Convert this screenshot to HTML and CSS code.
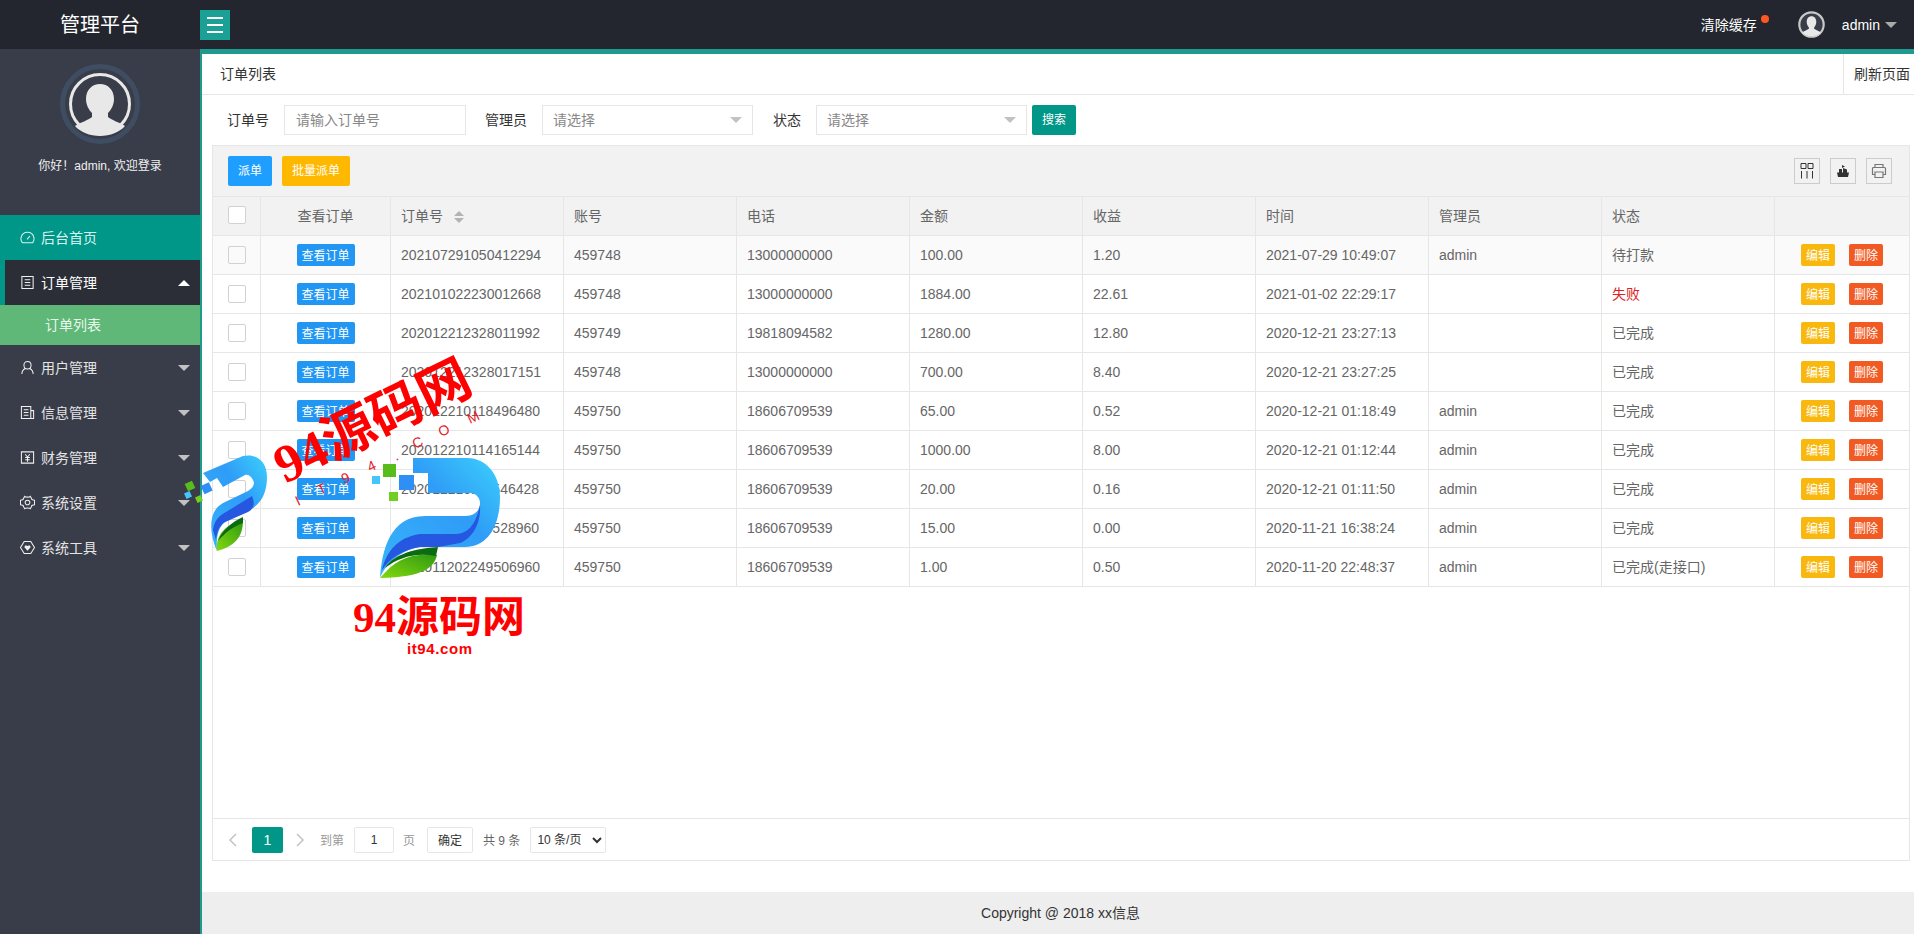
FILE: index.html
```html
<!DOCTYPE html>
<html>
	<head>
		<meta charset="utf-8">
		<title>管理平台</title>
		<link rel="stylesheet" href="styles.css">
	</head>

	<body>
		<div id="header">
			<div class="brand">管理平台</div>
			<div class="menuBtn"><span></span><span></span><span></span></div>
			<div class="headerRight">
				<div class="clearCache">清除缓存<i></i></div>
				<svg class="headAvatar" width="27" height="27" viewBox="0 0 62 62">
					<circle cx="31" cy="31" r="28" fill="#393d49" stroke="#c8c8c8" stroke-width="5"/>
					<path d="M31 12c7 0 11 5.500 11 13 0 6-3 10-5 13v3c3 3 11 4 15 9-5 5-13 8-21 8s-16-3-21-8c4-5 12-6 15-9v-3c-2-3-5-7-5-13 0-7.500 4-13 11-13z" fill="#e8e8e8"/>
				</svg>
				<div class="headUser">admin</div>
				<div class="caret down grey"></div>
			</div>
		</div>

		<div id="container">
			<div id="sidebar">
				<div class="userBox">
					<svg class="bigAvatar" width="80" height="80" viewBox="0 0 80 80">
						<circle cx="40" cy="40" r="37.500" fill="#393d49" stroke="#3f4d63" stroke-width="5"/>
						<circle cx="40" cy="40" r="29.500" fill="#393d49" stroke="#e8e8e8" stroke-width="3"/>
						<path d="M40 20c8 0 14 6 14 15 0 6-3 11-6 14v4c3 3 11 5 17 9-5 6-15 10-25 10s-20-4-25-10c6-4 14-6 17-9v-4c-3-3-6-8-6-14 0-9 6-15 14-15z" fill="#e8e8e8"/>
					</svg>
					<div class="hello">你好！admin, 欢迎登录</div>
				</div>

				<ul class="nav">
					<li class="navItem home">
						<svg class="navIcon" viewBox="0 0 16 16"><path d="M2.500 13.500C1 11.500.8 9.500 1.200 8 2 4.500 5 2.500 8 2.500s6 2 6.800 5.500c.4 1.500.2 3.500-1.300 5.500zM7.500 10l3-3.500"/></svg>
						<span class="navText">后台首页</span>
					</li>
					<li class="navItem open">
						<svg class="navIcon" viewBox="0 0 16 16"><path d="M2 1.500h12v13H2zM5 5h6M5 8h6M5 11h6"/></svg>
						<span class="navText">订单管理</span>
						<div class="caret up"></div>
					</li>
					<li class="navSub">订单列表</li>
					<li class="navItem">
						<svg class="navIcon" viewBox="0 0 16 16"><path d="M8 1.500c2.400 0 3.800 1.800 3.800 4S10.400 9.500 8 9.500 4.200 7.700 4.200 5.500 5.600 1.500 8 1.500zM2 15c0-3.500 2.500-5.500 3.500-6M14 15c0-3.500-2.500-5.500-3.500-6"/></svg>
						<span class="navText">用户管理</span>
						<div class="caret down"></div>
					</li>
					<li class="navItem">
						<svg class="navIcon" viewBox="0 0 16 16"><path d="M1.500 1.500h10v13h-10zM11.500 6h3v8.500h-3M4 5h5M4 8h5M4 11h5"/></svg>
						<span class="navText">信息管理</span>
						<div class="caret down"></div>
					</li>
					<li class="navItem">
						<svg class="navIcon" viewBox="0 0 16 16"><path d="M1.500 2h13v12h-13zM5.500 4.500L8 7.500l2.500-3M5.500 8h5M5.500 10.500h5M8 7.500v5"/></svg>
						<span class="navText">财务管理</span>
						<div class="caret down"></div>
					</li>
					<li class="navItem">
						<svg class="navIcon" viewBox="0 0 16 16"><path d="M5 1.500c1 1 5 1 6 0l1.500 2.500c-.5 1 1.500 1.500 3 1.500v5c-1.500 0-3.500.5-3 1.500L11 14.500c-1-1-5-1-6 0L3.500 12c.5-1-1.500-1.500-3-1.500v-5c1.500 0 3.500-.5 3-1.500zM8 5.500a2.500 2.500 0 1 0 0 5 2.500 2.500 0 0 0 0-5z"/></svg>
						<span class="navText">系统设置</span>
						<div class="caret down"></div>
					</li>
					<li class="navItem">
						<svg class="navIcon" viewBox="0 0 16 16"><path d="M4.500 1.500h7L15.500 8l-4 6.500h-7L.5 8z"/><path class="solid" d="M8 11.500L4.500 7.500 6 5.500l2 1 2-1 1.500 2z"/></svg>
						<span class="navText">系统工具</span>
						<div class="caret down"></div>
					</li>
				</ul>
			</div>

			<div id="main">
				<div class="tabBar">
					<div class="tabTitle">订单列表</div>
					<div class="tabRefresh">刷新页面</div>
				</div>

				<div class="filter">
					<label class="labelOrder">订单号</label>
					<input class="textInput" type="text" placeholder="请输入订单号">
					<label class="labelAdmin">管理员</label>
					<div class="fakeSelect"><span class="selectText">请选择</span><div class="caret down light"></div></div>
					<label class="labelState">状态</label>
					<div class="fakeSelect"><span class="selectText">请选择</span><div class="caret down light"></div></div>
					<button class="searchBtn">搜索</button>
				</div>

				<div class="tableBox">
					<div class="toolbar">
						<button class="toolBtn blue">派单</button>
						<button class="toolBtn amber">批量派单</button>
						<div class="toolIcons">
							<div class="iconBox">
								<svg width="14" height="16" viewBox="0 0 14 16"><path d="M1 .500h5v5H1zM8 .500h5v5H8zM1.500 8v7.500M7 8v7.500M12.500 8v7.500"/></svg>
							</div>
							<div class="iconBox">
								<svg width="14" height="14" viewBox="0 0 14 14"><path class="solid" d="M1 8.500h12l-1 4.500H2zM3 5h3v3.500H3zM7 4l4 1.500v3H7zM6 1l3 1.500-3 1.500z"/></svg>
							</div>
							<div class="iconBox">
								<svg width="16" height="16" viewBox="0 0 16 16"><path class="grey" d="M4 5V1.500h8V5M3.500 11.500h-2V5.500a1 1 0 0 1 1-1h11a1 1 0 0 1 1 1v6h-2M4 9h8v5.500H4z"/></svg>
							</div>
						</div>
					</div>

					<div class="tableWrap">
						<table class="orders">
							<colgroup>
								<col class="colCheck"><col class="colView"><col class="colData"><col class="colData"><col class="colData"><col class="colData"><col class="colData"><col class="colData"><col class="colData"><col class="colData"><col>
							</colgroup>
							<tr class="head">
								<td class="center"><i class="check white"></i></td>
								<td class="center">查看订单</td>
								<td>订单号<span class="sort"><b></b><b></b></span></td>
								<td>账号</td>
								<td>电话</td>
								<td>金额</td>
								<td>收益</td>
								<td>时间</td>
								<td>管理员</td>
								<td>状态</td>
								<td></td>
							</tr>
							<tr class="hover">
								<td class="center"><i class="check"></i></td>
								<td class="center"><button class="viewBtn">查看订单</button></td>
								<td>202107291050412294</td><td>459748</td><td>13000000000</td><td>100.00</td><td>1.20</td><td>2021-07-29 10:49:07</td><td>admin</td><td class="state">待打款</td>
								<td class="center"><button class="xsBtn amber">编辑</button><button class="xsBtn orange">删除</button></td>
							</tr>
							<tr>
								<td class="center"><i class="check"></i></td>
								<td class="center"><button class="viewBtn">查看订单</button></td>
								<td>202101022230012668</td><td>459748</td><td>13000000000</td><td>1884.00</td><td>22.61</td><td>2021-01-02 22:29:17</td><td></td><td class="state failed">失败</td>
								<td class="center"><button class="xsBtn amber">编辑</button><button class="xsBtn orange">删除</button></td>
							</tr>
							<tr>
								<td class="center"><i class="check"></i></td>
								<td class="center"><button class="viewBtn">查看订单</button></td>
								<td>202012212328011992</td><td>459749</td><td>19818094582</td><td>1280.00</td><td>12.80</td><td>2020-12-21 23:27:13</td><td></td><td class="state">已完成</td>
								<td class="center"><button class="xsBtn amber">编辑</button><button class="xsBtn orange">删除</button></td>
							</tr>
							<tr>
								<td class="center"><i class="check"></i></td>
								<td class="center"><button class="viewBtn">查看订单</button></td>
								<td>202012212328017151</td><td>459748</td><td>13000000000</td><td>700.00</td><td>8.40</td><td>2020-12-21 23:27:25</td><td></td><td class="state">已完成</td>
								<td class="center"><button class="xsBtn amber">编辑</button><button class="xsBtn orange">删除</button></td>
							</tr>
							<tr>
								<td class="center"><i class="check"></i></td>
								<td class="center"><button class="viewBtn">查看订单</button></td>
								<td>202012210118496480</td><td>459750</td><td>18606709539</td><td>65.00</td><td>0.52</td><td>2020-12-21 01:18:49</td><td>admin</td><td class="state">已完成</td>
								<td class="center"><button class="xsBtn amber">编辑</button><button class="xsBtn orange">删除</button></td>
							</tr>
							<tr>
								<td class="center"><i class="check"></i></td>
								<td class="center"><button class="viewBtn">查看订单</button></td>
								<td>202012210114165144</td><td>459750</td><td>18606709539</td><td>1000.00</td><td>8.00</td><td>2020-12-21 01:12:44</td><td>admin</td><td class="state">已完成</td>
								<td class="center"><button class="xsBtn amber">编辑</button><button class="xsBtn orange">删除</button></td>
							</tr>
							<tr>
								<td class="center"><i class="check"></i></td>
								<td class="center"><button class="viewBtn">查看订单</button></td>
								<td>202012210111546428</td><td>459750</td><td>18606709539</td><td>20.00</td><td>0.16</td><td>2020-12-21 01:11:50</td><td>admin</td><td class="state">已完成</td>
								<td class="center"><button class="xsBtn amber">编辑</button><button class="xsBtn orange">删除</button></td>
							</tr>
							<tr>
								<td class="center"><i class="check"></i></td>
								<td class="center"><button class="viewBtn">查看订单</button></td>
								<td>202011211638528960</td><td>459750</td><td>18606709539</td><td>15.00</td><td>0.00</td><td>2020-11-21 16:38:24</td><td>admin</td><td class="state">已完成</td>
								<td class="center"><button class="xsBtn amber">编辑</button><button class="xsBtn orange">删除</button></td>
							</tr>
							<tr>
								<td class="center"><i class="check"></i></td>
								<td class="center"><button class="viewBtn">查看订单</button></td>
								<td>202011202249506960</td><td>459750</td><td>18606709539</td><td>1.00</td><td>0.50</td><td>2020-11-20 22:48:37</td><td>admin</td><td class="state">已完成(走接口)</td>
								<td class="center"><button class="xsBtn amber">编辑</button><button class="xsBtn orange">删除</button></td>
							</tr>
						</table>
					</div>

					<div class="pager">
						<svg class="pageArrow" width="10" height="14" viewBox="0 0 10 14"><path d="M8 1L2 7l6 6"/></svg>
						<div class="pageNow">1</div>
						<svg class="pageArrow next" width="10" height="14" viewBox="0 0 10 14"><path d="M2 1l6 6-6 6"/></svg>
						<span class="pageText goto">到第</span>
						<input class="pageInput" type="text" value="1">
						<span class="pageText">页</span>
						<button class="pageOk">确定</button>
						<span class="pageTotal">共 9 条</span>
						<select class="pageSize"><option>10 条/页</option></select>
					</div>
				</div>

				<div id="footer">Copyright @ 2018 xx信息</div>
			</div>
		</div>

		<!-- watermark lying over the page -->
		<svg id="watermark" width="1914" height="934" viewBox="0 0 1914 934">
			<defs>
				<linearGradient id="pBody" x1="1" y1="0" x2="0" y2="1">
					<stop offset="0" stop-color="#3cd0fb"/>
					<stop offset=".4" stop-color="#2f9cf7"/>
					<stop offset="1" stop-color="#38b4f9"/>
				</linearGradient>
				<linearGradient id="pLeaf" x1="0" y1="1" x2="1" y2="0">
					<stop offset="0" stop-color="#84d80f"/>
					<stop offset="1" stop-color="#2f9a12"/>
				</linearGradient>
			</defs>

			<path d="M413 458H467C488 458 500 477 500 497C500 527 487 547 465 547H420C400 550 385 565 380 578C382 550 390 516 425 516H465C475 516 480 510 480 503C480 497 475 493 470 493H428V473H413Z" fill="url(#pBody)"/>
			<path d="M382 570C386 552 398 537 420 534H456C468 534 476 524 480 505C481 520 475 537 460 543L438 547H420C402 550 390 558 382 570Z" fill="#2557e0"/>
			<path d="M380 578C395 560 410 552 437 555C434 567 425 577 380 578Z" fill="url(#pLeaf)"/>
			<path d="M385 568C392 557 408 549 438 547L436 556C415 552 398 558 385 568Z" fill="#0b6b10"/>
			<rect x="383" y="464" width="13" height="13" fill="#58bd1a"/>
			<rect x="399" y="475" width="15" height="15" fill="#2f8ff5"/>
			<rect x="372" y="476" width="8" height="8" fill="#45c5fb"/>
			<rect x="389" y="492" width="9" height="9" fill="#70cf20"/>

			<path d="M203 473L243 456C258 453 267 463 267 477C267 492 262 503 250 510L225 522C218 527 216 538 217 551C212 540 210 528 212 518C214 510 218 506 223 503L248 491C254 487 255 483 253 480C251 476 248 474 245 475L223 487L217 478L210 482Z" fill="url(#pBody)"/>
			<path d="M213 530C214 520 220 515 226 512L252 496C256 505 252 510 248 512L225 522C219 526 217 532 216 540Z" fill="#2557e0"/>
			<path d="M217 551C215 535 225 525 243 520C243 537 235 546 217 551Z" fill="url(#pLeaf)"/>
			<path d="M218 541C222 530 232 522 243 517L243 523C232 527 225 533 218 541Z" fill="#0b6b10"/>
			<rect x="186" y="482" width="8" height="8" fill="#58bd1a" transform="rotate(-25 190 486)"/>
			<rect x="202" y="484" width="9" height="9" fill="#2f8ff5" transform="rotate(-25 206 488)"/>
			<rect x="185" y="492" width="6" height="6" fill="#45c5fb" transform="rotate(-25 188 495)"/>
			<rect x="196" y="496" width="6" height="6" fill="#70cf20" transform="rotate(-25 199 499)"/>

			<text class="wmBig" x="285" y="484" transform="rotate(-26 285 484)">94源码网</text>
			<text class="wmMid" x="353" y="632">94源码网</text>
			<text class="wmUrl" x="407" y="654">it94.com</text>
			<text class="wmDot" transform="translate(298 506) rotate(-25)">I</text>
			<text class="wmDot" transform="translate(320 495) rotate(-25)">T</text>
			<text class="wmDot" transform="translate(344 484) rotate(-25)">9</text>
			<text class="wmDot" transform="translate(370 472) rotate(-25)">4</text>
			<text class="wmDot" transform="translate(396 461) rotate(-25)">.</text>
			<text class="wmDot" transform="translate(415 449) rotate(-25)">C</text>
			<text class="wmDot" transform="translate(441 437) rotate(-25)">O</text>
			<text class="wmDot" transform="translate(470 424) rotate(-25)">M</text>
		</svg>
	</body>
</html>
```

FILE: styles.css
```css
* {
	box-sizing: border-box;
}
html, body {
	height: 100%;
}
body {
	margin: 0;
	overflow: hidden;
	font-family: "Liberation Sans", "Noto Sans CJK SC", sans-serif;
	font-size: 14px;
	color: #666;
	background: #fff;
}
ul {
	list-style: none;
	margin: 0;
	padding: 0;
}
button {
	font-family: inherit;
	border: 0;
	padding: 0;
	color: #fff;
}

/* header */
#header {
	height: 49px;
	background: #23262e;
	display: flex;
	align-items: center;
	color: #fff;
}
.brand {
	width: 200px;
	padding-bottom: 2px;
	text-align: center;
	font-size: 20px;
}
.menuBtn {
	width: 30px;
	height: 30px;
	background: #1aa094;
	display: flex;
	flex-direction: column;
	justify-content: center;
	align-items: center;
	gap: 5px;
}
.menuBtn span {
	width: 16px;
	height: 2px;
	background: #fff;
}
.headerRight {
	margin-left: auto;
	display: flex;
	align-items: center;
	padding-right: 17px;
}
.clearCache {
	position: relative;
	margin-right: 41px;
	padding-bottom: 2px;
}
.clearCache i {
	position: absolute;
	right: -12px;
	top: 1px;
	width: 8px;
	height: 8px;
	border-radius: 50%;
	background: #ff5722;
}
.headAvatar {
	margin-right: 17px;
}
.headUser {
	margin-right: 5px;
}
.caret {
	width: 0;
	height: 0;
	border-left: 6px solid transparent;
	border-right: 6px solid transparent;
}
.caret.down {
	border-top: 6px solid #c2c2c2;
}
.caret.up {
	border-bottom: 6px solid #fff;
}
.caret.grey {
	border-top-color: #aaa;
}
.caret.light {
	border-top-color: #c2c2c2;
	margin-left: auto;
}

/* sidebar */
#container {
	display: flex;
	height: calc(100% - 49px);
}
#sidebar {
	width: 200px;
	flex: none;
	background: #393d49;
	color: #e4e4e4;
}
.userBox {
	height: 166px;
	padding-top: 15px;
	display: flex;
	flex-direction: column;
	align-items: center;
}
.hello {
	margin-top: 12px;
	font-size: 12px;
	color: #f0f0f0;
}
.navItem {
	height: 45px;
	display: flex;
	align-items: center;
	padding: 0 10px 0 20px;
	gap: 6px;
}
.navText {
	margin-bottom: 2px;
}
.navItem .caret {
	margin-left: auto;
}
.navIcon {
	width: 15px;
	height: 15px;
	fill: none;
	stroke: #f0f0f0;
	stroke-width: 1.100;
}
.navIcon .solid {
	fill: #f0f0f0;
	stroke: none;
}
.home {
	background: #009688;
	color: #d8f5f0;
}
.home .navIcon {
	stroke: #d8f5f0;
}
.open {
	background: #2b2e37;
	border-left: 5px solid #009688;
	padding-left: 15px;
	color: #fff;
}
.navSub {
	height: 40px;
	line-height: 40px;
	padding-left: 45px;
	background: #5fb878;
	color: #e8f7ec;
}

/* main */
#main {
	flex: 1;
	display: flex;
	flex-direction: column;
	min-width: 0;
	border-top: 5px solid #1f9a8f;
	border-left: 2px solid #1f9a8f;
}
.tabBar {
	height: 41px;
	flex: none;
	display: flex;
	align-items: stretch;
	border-bottom: 1px solid #e6e6e6;
	color: #333;
}
.tabTitle {
	line-height: 41px;
	padding-left: 18px;
}
.tabRefresh {
	margin-left: auto;
	width: 71px;
	line-height: 40px;
	padding-left: 10px;
	border-left: 1px solid #e6e6e6;
	white-space: nowrap;
}
.filter {
	height: 50px;
	flex: none;
	display: flex;
	align-items: flex-start;
	padding: 10px 0 0 25px;
}
.filter label {
	line-height: 30px;
	color: #333;
}
.labelOrder {
	margin-right: 15px;
}
.labelAdmin {
	margin: 0 15px 0 19px;
}
.labelState {
	margin: 0 15px 0 20px;
}
.textInput {
	width: 182px;
	height: 30px;
	padding: 0 11px;
	border: 1px solid #e6e6e6;
	font: inherit;
	outline: 0;
}
.textInput::placeholder {
	color: #888;
}
.fakeSelect {
	width: 211px;
	height: 30px;
	padding: 0 10px;
	border: 1px solid #e6e6e6;
	display: flex;
	align-items: center;
	color: #888;
}
.selectText {
	margin-bottom: 2px;
}
.searchBtn {
	width: 44px;
	height: 30px;
	margin-left: 5px;
	padding-bottom: 4px;
	background: #009688;
	border-radius: 2px;
	font-size: 12px;
}
.tableBox {
	flex: 1;
	min-height: 0;
	margin: 0 4px 31px 10px;
	border: 1px solid #e6e6e6;
	display: flex;
	flex-direction: column;
}
.toolbar {
	height: 51px;
	flex: none;
	background: #f2f2f2;
	border-bottom: 1px solid #e6e6e6;
	display: flex;
	align-items: center;
	padding: 0 17px 0 15px;
}
.toolBtn {
	height: 30px;
	margin-right: 10px;
	padding-bottom: 4px;
	border-radius: 2px;
	font-size: 12px;
}
.toolBtn.blue {
	width: 44px;
	background: #1e9fff;
}
.toolBtn.amber {
	width: 68px;
	background: #ffb800;
}
.toolIcons {
	margin-left: auto;
	display: flex;
	gap: 10px;
}
.iconBox {
	width: 26px;
	height: 26px;
	border: 1px solid #ccc;
	display: flex;
	align-items: center;
	justify-content: center;
}
.iconBox svg {
	fill: none;
	stroke: #333;
	stroke-width: 1;
}
.iconBox .solid {
	fill: #333;
	stroke: none;
}
.iconBox .grey {
	stroke: #777;
	stroke-width: 1.200;
}

/* table */
.tableWrap {
	flex: 1;
	min-height: 0;
}
.orders {
	width: 100%;
	table-layout: fixed;
	border-collapse: separate;
	border-spacing: 0;
}
.colCheck {
	width: 48px;
}
.colView {
	width: 130px;
}
.colData {
	width: 173px;
}
.orders tr {
	height: 39px;
}
.orders td {
	padding: 0 10px;
	border-right: 1px solid #e6e6e6;
	border-bottom: 1px solid #e6e6e6;
	white-space: nowrap;
	overflow: hidden;
}
.orders td:last-child {
	border-right: 0;
	padding: 0;
}
.orders .center {
	text-align: center;
}
.orders td.state, .head td {
	padding-bottom: 2px;
}
.head td {
	background: #f2f2f2;
}
.hover td {
	background: #fafafa;
}
.orders td.failed {
	color: #e02020;
}
.check {
	display: inline-block;
	width: 18px;
	height: 18px;
	border: 1px solid #d2d2d2;
	border-radius: 2px;
	vertical-align: middle;
}
.check.white {
	background: #fff;
}
.sort {
	display: inline-block;
	margin-left: 11px;
	vertical-align: middle;
}
.sort b {
	display: block;
	width: 0;
	height: 0;
	border-left: 5px solid transparent;
	border-right: 5px solid transparent;
	border-bottom: 5px solid #b2b2b2;
	margin-bottom: 2px;
}
.sort b + b {
	border-bottom: 0;
	border-top: 5px solid #b2b2b2;
	margin-bottom: 0;
}
.viewBtn {
	width: 58px;
	height: 22px;
	padding-bottom: 2px;
	background: #2196f3;
	border-radius: 2px;
	font-size: 12px;
	vertical-align: middle;
}
.xsBtn {
	width: 34px;
	height: 22px;
	padding-bottom: 2px;
	border-radius: 2px;
	font-size: 12px;
	vertical-align: middle;
}
.xsBtn.amber {
	background: #f9b80d;
}
.xsBtn.orange {
	background: #f25a24;
	margin-left: 14px;
}

/* pager */
.pager {
	height: 42px;
	flex: none;
	border-top: 1px solid #e6e6e6;
	display: flex;
	align-items: center;
	padding-left: 15px;
	font-size: 14px;
}
.pageArrow {
	fill: none;
	stroke: #c2c2c2;
	stroke-width: 1.500;
}
.pageNow {
	width: 31px;
	height: 26px;
	margin-left: 14px;
	line-height: 26px;
	text-align: center;
	background: #009688;
	border-radius: 2px;
	color: #fff;
}
.pageArrow.next {
	margin-left: 12px;
}
.pageText {
	color: #999;
	font-size: 12px;
	margin-right: 10px;
}
.pageText.goto {
	margin-left: 15px;
}
.pageInput {
	width: 40px;
	height: 26px;
	margin-right: 9px;
	border: 1px solid #e6e6e6;
	border-radius: 2px;
	text-align: center;
	font: inherit;
	font-size: 12px;
	color: #333;
	outline: 0;
}
.pageOk {
	width: 46px;
	height: 26px;
	margin-left: 2px;
	background: #fff;
	border: 1px solid #e6e6e6;
	border-radius: 2px;
	color: #333;
	font-size: 12px;
}
.pageTotal {
	margin-left: 10px;
	font-size: 12px;
	color: #666;
}
.pageSize {
	width: 76px;
	height: 26px;
	margin-left: 10px;
	padding-left: 2px;
	border: 1px solid #e6e6e6;
	border-radius: 2px;
	background: #fff;
	font: inherit;
	font-size: 12px;
	color: #333;
}

#footer {
	height: 42px;
	flex: none;
	line-height: 43px;
	padding-left: 5px;
	text-align: center;
	background: #eee;
	color: #333;
}

/* watermark */
#watermark {
	position: absolute;
	left: 0;
	top: 0;
	pointer-events: none;
}
#watermark text {
	fill: #f00;
	font-family: "Liberation Serif", "Noto Sans CJK SC", serif;
	font-weight: 700;
}
.wmBig {
	font-size: 53px;
}
.wmMid {
	font-size: 43px;
}
#watermark .wmUrl {
	font-family: "Liberation Sans", sans-serif;
	font-size: 15px;
	letter-spacing: .6px;
}
#watermark .wmDot {
	font-family: "Liberation Sans", sans-serif;
	font-size: 14px;
	font-weight: 400;
	fill: #e8202a;
}
```
